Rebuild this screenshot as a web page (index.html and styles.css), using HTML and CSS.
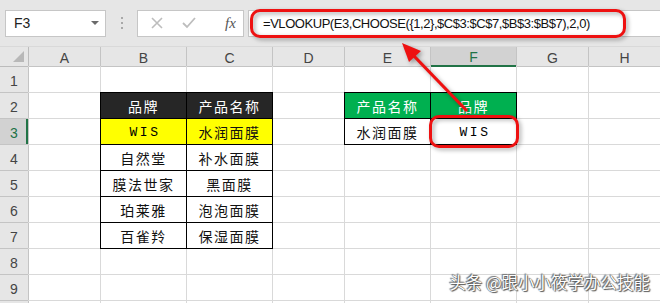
FILE: index.html
```html
<!DOCTYPE html>
<html lang="zh">
<head>
  <meta charset="UTF-8">
  <title>VLOOKUP CHOOSE</title>
  <link rel="stylesheet" href="styles.css">
</head>
<body>

<div class="topbar">
  <div class="namebox">
    <span>F3</span>
    <span class="caret"></span>
  </div>
  <div class="dots"><i></i><i></i><i></i></div>
  <div class="fxbox">
    <svg width="14" height="14" viewBox="0 0 14 14"><path d="M2 2 L12 12 M12 2 L2 12" stroke="#bdbdbd" stroke-width="1.6" fill="none"/></svg>
    <svg width="16" height="14" viewBox="0 0 16 14"><path d="M2 7 L6 11 L14 2" stroke="#bdbdbd" stroke-width="1.8" fill="none"/></svg>
    <span class="fx">fx</span>
  </div>
  <div class="formula">=VLOOKUP(E3,CHOOSE({1,2},$C$3:$C$7,$B$3:$B$7),2,0)</div>
</div>

<div class="sheet">
  <!-- Spaltenköpfe -->
  <div class="corner"><span></span></div>
  <div class="colhead">A</div>
  <div class="colhead">B</div>
  <div class="colhead">C</div>
  <div class="colhead">D</div>
  <div class="colhead">E</div>
  <div class="colhead sel">F</div>
  <div class="colhead">G</div>
  <div class="colhead">H</div>

  <!-- 1 -->
  <div class="rowhead">1</div>
  <div></div><div></div><div></div><div></div><div></div><div></div><div></div><div></div>

  <!-- 2 -->
  <div class="rowhead">2</div>
  <div></div>
  <div class="bk dark">品牌</div>
  <div class="bk dark">产品名称</div>
  <div></div>
  <div class="bk green">产品名称</div>
  <div class="bk green">品牌</div>
  <div></div><div></div>

  <!-- 3 -->
  <div class="rowhead sel">3</div>
  <div></div>
  <div class="bk yellow mono">WIS</div>
  <div class="bk yellow">水润面膜</div>
  <div></div>
  <div class="bk">水润面膜</div>
  <div class="bk mono">WIS</div>
  <div></div><div></div>

  <!-- 4 -->
  <div class="rowhead">4</div>
  <div></div>
  <div class="bk">自然堂</div>
  <div class="bk">补水面膜</div>
  <div></div><div></div><div></div><div></div><div></div>

  <!-- 5 -->
  <div class="rowhead">5</div>
  <div></div>
  <div class="bk">膜法世家</div>
  <div class="bk">黑面膜</div>
  <div></div><div></div><div></div><div></div><div></div>

  <!-- 6 -->
  <div class="rowhead">6</div>
  <div></div>
  <div class="bk">珀莱雅</div>
  <div class="bk">泡泡面膜</div>
  <div></div><div></div><div></div><div></div><div></div>

  <!-- 7 -->
  <div class="rowhead">7</div>
  <div></div>
  <div class="bk">百雀羚</div>
  <div class="bk">保湿面膜</div>
  <div></div><div></div><div></div><div></div><div></div>

  <!-- 8 -->
  <div class="rowhead">8</div>
  <div></div><div></div><div></div><div></div><div></div><div></div><div></div><div></div>

  <!-- 9 -->
  <div class="rowhead">9</div>
  <div></div><div></div><div></div><div></div><div></div><div></div><div></div><div></div>

  <!-- 10 (nur angeschnitten) -->
  <div class="rowhead"></div>
  <div></div><div></div><div></div><div></div><div></div><div></div><div></div><div></div>
</div>

<!-- Markierungen -->
<div class="mark mark-formula"></div>
<div class="mark mark-cell"></div>
<svg class="arrow" width="660" height="303" viewBox="0 0 660 303">
  <line x1="467" y1="111" x2="413" y2="55" stroke="#ee1111" stroke-width="3.2"/>
  <polygon points="402,43 421,51 409,62" fill="#ee1111"/>
</svg>

<div class="watermark">头条 @跟小小筱学办公技能</div>

</body>
</html>
```

FILE: styles.css
```css
body {
  margin: 0;
  width: 660px;
  height: 303px;
  overflow: hidden;
  position: relative;
  background: #fff;
  font-family: "Liberation Sans", "Noto Sans CJK SC", sans-serif;
}

.topbar {
  height: 46px;
  background: #e6e6e6;
  display: flex;
  align-items: center;
}

.namebox {
  margin-left: 5px;
  background: #fff;
  border: 1px solid #c6c6c6;
  display: flex;
  align-items: center;
  justify-content: space-between;
  padding: 0 6px 0 8px;
  box-sizing: border-box;
  width: 101px;
  height: 27px;
  font-size: 14px;
  color: #222;
}

.caret {
  width: 0;
  height: 0;
  border-left: 4px solid transparent;
  border-right: 4px solid transparent;
  border-top: 4px solid #6a6a6a;
}

.dots {
  width: 31px;
  display: flex;
  flex-direction: column;
  align-items: center;
  gap: 3px;
}

.dots i {
  width: 2px;
  height: 2px;
  background: #a8a8a8;
}

.fxbox {
  width: 107px;
  height: 27px;
  box-sizing: border-box;
  background: #fff;
  border: 1px solid #c6c6c6;
  display: flex;
  align-items: center;
  gap: 17px;
  padding-left: 12px;
}

.fx {
  font-family: "Liberation Serif", serif;
  font-style: italic;
  font-size: 15px;
  color: #555;
  margin-left: 11px;
}

.formula {
  margin-left: 4px;
  flex: 1;
  height: 27px;
  box-sizing: border-box;
  background: #fff;
  border: 1px solid #c6c6c6;
  border-right: none;
  font-size: 13px;
  letter-spacing: -0.45px;
  line-height: 25px;
  padding-left: 14px;
  color: #111;
}

.sheet {
  display: grid;
  grid-template-columns: 28px 71px 85px 85px 71px 85px 85px 71px 71px;
  grid-template-rows: 19px repeat(10, 25px);
  gap: 1px;
  padding-top: 1px;
  background: #d9d9d9;
}

.sheet > div {
  background: #fff;
  display: flex;
  align-items: center;
  justify-content: center;
  font-family: "Noto Sans CJK SC", sans-serif;
  font-size: 14px;
  letter-spacing: 1.5px;
  color: #111;
}

.sheet > .corner {
  background: #e6e6e6;
  align-items: flex-end;
  justify-content: flex-end;
  padding: 0 4px 4px 0;
  box-shadow: 1px 0 0 #bcbcbc, 0 1px 0 #bcbcbc;
}

.corner span {
  width: 0;
  height: 0;
  border-left: 11px solid transparent;
  border-bottom: 11px solid #b8b8b8;
}

.sheet > .colhead,
.sheet > .rowhead {
  background: #e6e6e6;
  font-family: "Liberation Sans", sans-serif;
  font-size: 14px;
  letter-spacing: 0;
  color: #444;
  box-shadow: 1px 0 0 #c4c4c4, 0 1px 0 #c4c4c4;
}

.sheet > .colhead {
  padding-top: 2px;
}

.sheet > .rowhead {
  padding-top: 3px;
  box-sizing: border-box;
}

.sheet > .colhead.sel {
  background: #d2d2d2;
  color: #217346;
  box-shadow: 1px 0 0 #c4c4c4, 0 1px 0 #217346;
  border-bottom: 1px solid #217346;
  box-sizing: border-box;
}

.sheet > .rowhead.sel {
  background: #d2d2d2;
  color: #217346;
  border-right: 2px solid #217346;
  box-sizing: border-box;
  padding-left: 2px;
}

.sheet > .bk {
  box-shadow: 0 0 0 1px #000;
  padding-top: 1px;
  box-sizing: border-box;
}

.sheet > .dark {
  background: #262626;
  color: #fff;
}

.sheet > .green {
  background: #00b050;
  color: #fff;
}

.sheet > .yellow {
  background: #ffff00;
}

.sheet > .mono {
  font-family: "Liberation Mono", monospace;
  font-size: 13px;
  letter-spacing: 2.5px;
  padding-left: 3px;
  color: #000;
}

.mark {
  position: absolute;
  border: 3px solid #ee1111;
  border-radius: 10px;
  box-sizing: border-box;
  filter: drop-shadow(2px 2px 2px rgba(0, 0, 0, 0.35));
}

.mark-formula {
  left: 250px;
  top: 9px;
  width: 376px;
  height: 29px;
}

.mark-cell {
  left: 429px;
  top: 115px;
  width: 90px;
  height: 33px;
}

.arrow {
  position: absolute;
  left: 0;
  top: 0;
  pointer-events: none;
  filter: drop-shadow(2px 2px 2px rgba(0, 0, 0, 0.35));
}

.watermark {
  position: absolute;
  right: 10px;
  bottom: 9px;
  font-family: "Noto Sans CJK SC", sans-serif;
  font-size: 16.5px;
  color: #fff;
  text-shadow: 0 0 1px #333, 1px 1px 1px #555, -1px -1px 1px #777;
}
```
